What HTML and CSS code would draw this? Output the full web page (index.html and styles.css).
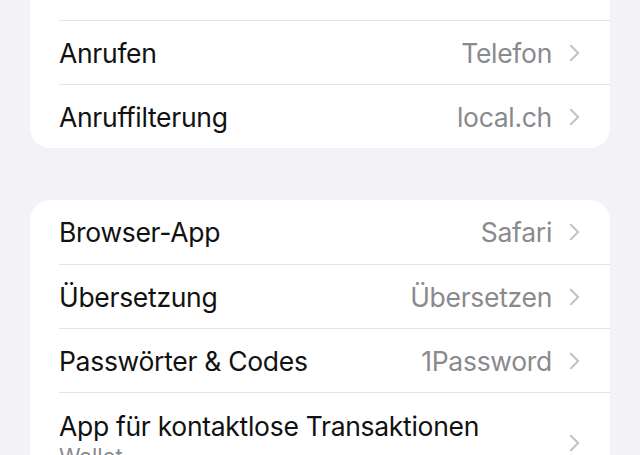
FILE: index.html
```html
<!DOCTYPE html>
<html lang="de">
	<head>
		<meta charset="UTF-8" />
		<meta name="viewport" content="width=device-width, initial-scale=1.0" />
		<title>Standard-Apps</title>
		<link rel="stylesheet" href="styles.css">
	</head>
	<body>
		<main class="settings">
			<section class="group group-cut">
				<div class="row row-empty"></div>
				<a class="row">
					<span class="label">Anrufen</span>
					<span class="value">Telefon</span>
					<svg class="chevron" viewBox="0 0 12 20"><path d="M2 2l8 8-8 8" /></svg>
				</a>
				<a class="row">
					<span class="label">Anruffilterung</span>
					<span class="value">local.ch</span>
					<svg class="chevron" viewBox="0 0 12 20"><path d="M2 2l8 8-8 8" /></svg>
				</a>
			</section>

			<section class="group">
				<a class="row">
					<span class="label">Browser-App</span>
					<span class="value">Safari</span>
					<svg class="chevron" viewBox="0 0 12 20"><path d="M2 2l8 8-8 8" /></svg>
				</a>
				<a class="row">
					<span class="label">Übersetzung</span>
					<span class="value">Übersetzen</span>
					<svg class="chevron" viewBox="0 0 12 20"><path d="M2 2l8 8-8 8" /></svg>
				</a>
				<a class="row">
					<span class="label">Passwörter &amp; Codes</span>
					<span class="value">1Password</span>
					<svg class="chevron" viewBox="0 0 12 20"><path d="M2 2l8 8-8 8" /></svg>
				</a>
				<a class="row row-tall">
					<span class="stack">
						<span class="label">App für kontaktlose Transaktionen</span>
						<span class="sub">Wallet</span>
					</span>
					<svg class="chevron" viewBox="0 0 12 20"><path d="M2 2l8 8-8 8" /></svg>
				</a>
			</section>
		</main>
	</body>
</html>
```

FILE: styles.css
```css
* {
	padding: 0;
	margin: 0;
	box-sizing: border-box;
}
html, body {
	height: 100%;
	overflow: hidden;
}
body {
	background-color: #f2f2f7;
	font-family: Inter, "Noto Sans", sans-serif;
	color: #000;
}
.settings {
	display: flex;
	flex-direction: column;
	gap: 52px;
	padding: 0 30px;
}
.group {
	background-color: #fff;
	border-radius: 20px;
	overflow: hidden;
}
.group-cut {
	margin-top: -44px;
}
.row {
	display: flex;
	align-items: center;
	height: 64px;
	margin-left: 29px;
	padding-right: 30px;
	border-top: 1px solid #e3e3e6;
	gap: 17px;
}
.row:first-child {
	border-top: none;
}
.row-tall {
	height: 100px;
	align-items: center;
}
.label {
	font-size: 26.5px;
	letter-spacing: -0.3px;
	color: #111;
	flex: 1;
	white-space: nowrap;
}
.value {
	font-size: 26.5px;
	letter-spacing: -0.3px;
	color: #8a8a8e;
}
.stack {
	display: flex;
	flex-direction: column;
	flex: 1;
	margin-top: -6px;
}
.sub {
	font-size: 22px;
	color: #8a8a8e;
	margin-top: 1px;
}
.chevron {
	width: 11px;
	height: 18px;
	flex: none;
}
.chevron path {
	fill: none;
	stroke: #c4c4c7;
	stroke-width: 2.4;
	stroke-linecap: round;
	stroke-linejoin: round;
}
```
